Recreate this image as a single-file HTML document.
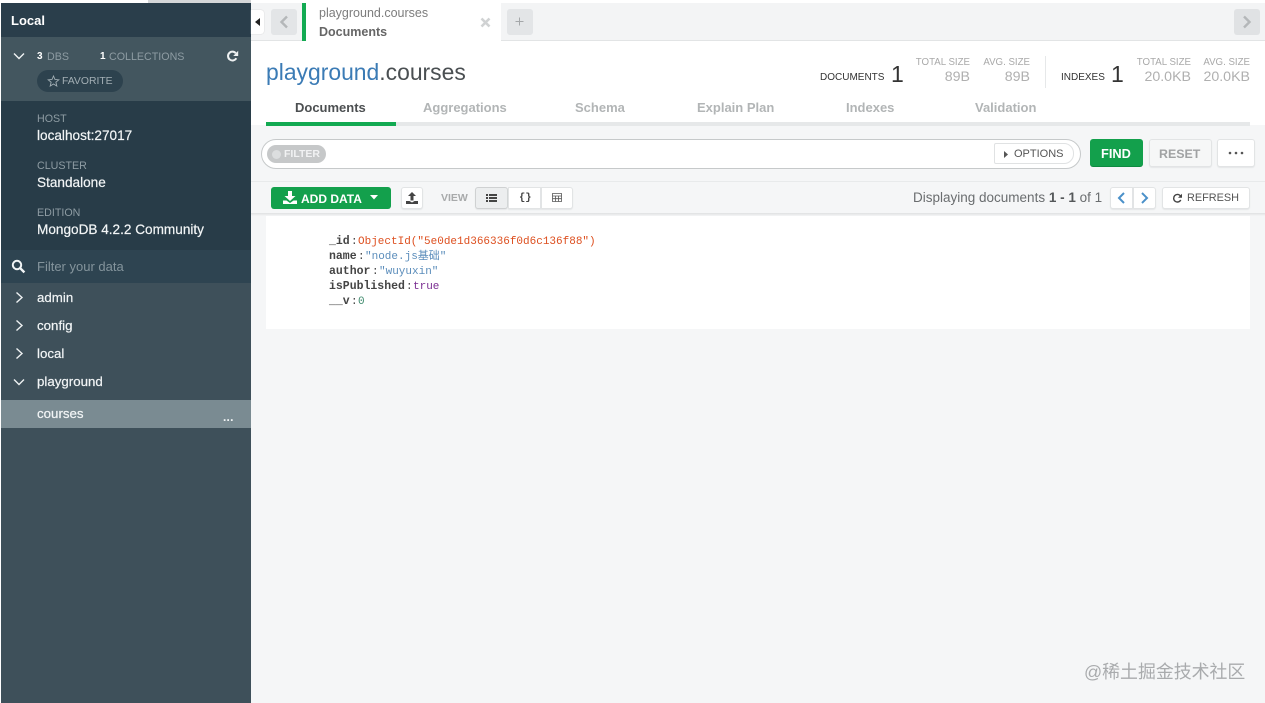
<!DOCTYPE html>
<html>
<head>
<meta charset="utf-8">
<style>
html,body{margin:0;padding:0;width:1265px;height:703px;overflow:hidden;background:#f5f6f7}
body{position:relative;font-family:"Liberation Sans","Noto Sans CJK SC",sans-serif}
div,span.a,svg{position:absolute}
.t{position:absolute;white-space:nowrap;line-height:1}
.w{color:#f2f5f6;font-size:13.3px;-webkit-text-stroke:.2px #f2f5f6}
.v{font-size:13.6px}
.g{color:#8e9ca3;font-size:10.7px}
.tab{font-size:13px;font-weight:bold;color:#b2b5b6;top:101px}
.sl{font-size:9.7px;color:#a9a9a9;top:58px}
.sv{font-size:14.2px;color:#b0b0b0;top:70px}
.m{font-family:"Liberation Mono","Noto Sans CJK SC",monospace;font-size:11px;white-space:nowrap;line-height:1;position:absolute}
.k{color:#444;font-weight:bold;font-size:11.5px}
.btn{background:#fff;border:1px solid #e2e4e5;border-radius:3px;box-sizing:border-box;box-shadow:0 1px 1px #e4e6e7}
</style>
</head>
<body>
<!-- top strip -->
<div style="left:0;top:0;width:1265px;height:3px;background:#fff"></div>
<div style="left:148px;top:0;width:103px;height:3px;background:#d5d7d9"></div>

<!-- sidebar -->
<div style="left:0;top:3px;width:1px;height:700px;background:#fff"></div>
<div style="left:1px;top:3px;width:250px;height:700px;background:#3e505a"></div>
<div style="left:1px;top:3px;width:250px;height:34px;background:#2a3e4b"></div>
<div class="t" style="left:11px;top:14px;font-size:13px;font-weight:bold;color:#fff">Local</div>
<div style="left:1px;top:37px;width:250px;height:64px;background:#43565f"></div>
<svg style="left:13px;top:52px" width="12" height="8" viewBox="0 0 12 8"><path d="M1 1.5 6 6.5 11 1.5" fill="none" stroke="#f0f3f4" stroke-width="1.4"/></svg>
<div class="t" style="left:37px;top:52px;font-size:10px;font-weight:bold;color:#fff">3</div>
<div class="t g" style="left:47px;top:52px">DBS</div>
<div class="t" style="left:100px;top:52px;font-size:10px;font-weight:bold;color:#fff">1</div>
<div class="t g" style="left:109px;top:52px">COLLECTIONS</div>
<svg style="left:226px;top:50px" width="13" height="13" viewBox="0 0 13 13"><path d="M10.3 8.2A4.4 4.4 0 1 1 9.8 3.2" fill="none" stroke="#eef1f2" stroke-width="2"/><path d="M12.2 .8V6H7.2Z" fill="#eef1f2"/></svg>
<div style="left:37px;top:70px;width:86px;height:22px;border-radius:11px;background:#2d424e"></div>
<svg style="left:47px;top:75px" width="13" height="12" viewBox="0 0 13 12"><path d="M6.5 1 8 4.5 11.8 4.8 8.9 7.2 9.8 11 6.5 9 3.2 11 4.1 7.2 1.2 4.8 5 4.5Z" fill="none" stroke="#a3afb5" stroke-width=".9"/></svg>
<div class="t g" style="left:62px;top:77px;color:#a3afb5;font-size:10.4px">FAVORITE</div>

<div style="left:1px;top:101px;width:250px;height:149px;background:#283c48"></div>
<div class="t g" style="left:37px;top:114px">HOST</div>
<div class="t w v" style="left:37px;top:129px">localhost:27017</div>
<div class="t g" style="left:37px;top:161px">CLUSTER</div>
<div class="t w v" style="left:37px;top:176px">Standalone</div>
<div class="t g" style="left:37px;top:208px">EDITION</div>
<div class="t w v" style="left:37px;top:223px">MongoDB 4.2.2 Community</div>

<div style="left:1px;top:250px;width:250px;height:33px;background:#2e4451"></div>
<svg style="left:11px;top:259px" width="15" height="15" viewBox="0 0 15 15"><circle cx="6" cy="6" r="4.2" fill="none" stroke="#f2f5f6" stroke-width="2"/><path d="M9.2 9.2 13.4 13.4" stroke="#f2f5f6" stroke-width="2.4"/></svg>
<div class="t" style="left:37px;top:260px;font-size:13px;color:#84949c">Filter your data</div>

<svg style="left:15px;top:291px" width="9" height="13" viewBox="0 0 9 13"><path d="M1.5 1.5 7 6.5 1.5 11.5" fill="none" stroke="#eef1f2" stroke-width="1.4"/></svg>
<div class="t w" style="left:37px;top:291px">admin</div>
<svg style="left:15px;top:319px" width="9" height="13" viewBox="0 0 9 13"><path d="M1.5 1.5 7 6.5 1.5 11.5" fill="none" stroke="#eef1f2" stroke-width="1.4"/></svg>
<div class="t w" style="left:37px;top:319px">config</div>
<svg style="left:15px;top:347px" width="9" height="13" viewBox="0 0 9 13"><path d="M1.5 1.5 7 6.5 1.5 11.5" fill="none" stroke="#eef1f2" stroke-width="1.4"/></svg>
<div class="t w" style="left:37px;top:347px">local</div>
<svg style="left:13px;top:378px" width="12" height="8" viewBox="0 0 12 8"><path d="M1 1.5 6 6.5 11 1.5" fill="none" stroke="#eef1f2" stroke-width="1.4"/></svg>
<div class="t w" style="left:37px;top:375px">playground</div>
<div style="left:1px;top:400px;width:250px;height:28px;background:#7a8b92"></div>
<div class="t w" style="left:37px;top:407px">courses</div>
<div class="t" style="left:223px;top:411px;font-size:12px;font-weight:bold;color:#f2f5f6;letter-spacing:.2px">...</div>

<!-- tab bar -->
<div style="left:251px;top:3px;width:1014px;height:37px;background:#f3f4f5"></div>
<div style="left:251px;top:40px;width:1014px;height:1px;background:#e2e4e5"></div>
<div style="left:251px;top:10px;width:13px;height:24px;background:#fff;border-radius:0 3px 3px 0;box-shadow:0 0 1px #bbb"></div>
<svg style="left:255px;top:18px" width="6" height="8" viewBox="0 0 6 8"><path d="M5 0V8L0 4Z" fill="#222"/></svg>
<div style="left:271px;top:9px;width:26px;height:26px;background:#e3e5e7;border-radius:3px"></div>
<svg style="left:279px;top:15px" width="10" height="14" viewBox="0 0 10 14"><path d="M8 1.5 2.5 7 8 12.5" fill="none" stroke="#b4b7b9" stroke-width="2.4"/></svg>
<div style="left:302px;top:3px;width:199px;height:38px;background:#fff"></div>
<div style="left:302px;top:3px;width:4px;height:38px;background:#13aa52"></div>
<div class="t" style="left:319px;top:7px;font-size:12.5px;color:#7d7d7d">playground.courses</div>
<div class="t" style="left:319px;top:26px;font-size:12.5px;font-weight:bold;color:#666">Documents</div>
<svg style="left:480px;top:17px" width="11" height="11" viewBox="0 0 11 11"><path d="M1.5 1.5 9.5 9.5M9.5 1.5 1.5 9.5" stroke="#d0d2d3" stroke-width="2.6"/></svg>
<div style="left:507px;top:9px;width:26px;height:26px;background:#e3e5e7;border-radius:3px"></div>
<svg style="left:515px;top:17px" width="9" height="9" viewBox="0 0 9 9"><path d="M4.5 .5V8.5M.5 4.5H8.5" stroke="#a4a7a9" stroke-width="1"/></svg>
<div style="left:1234px;top:9px;width:26px;height:26px;background:#e0e2e4;border-radius:3px"></div>
<svg style="left:1242px;top:15px" width="10" height="14" viewBox="0 0 10 14"><path d="M2 1.5 7.5 7 2 12.5" fill="none" stroke="#b4b7b9" stroke-width="2.4"/></svg>

<!-- header -->
<div style="left:251px;top:41px;width:1014px;height:84px;background:#fff"></div>
<div class="t" style="left:266px;top:61px;font-size:22.9px;color:#3b7bb5">playground<span style="color:#4a4f52">.courses</span></div>

<div class="t" style="left:820px;top:73px;font-size:10px;color:#333">DOCUMENTS</div>
<div class="t" style="left:891px;top:63px;font-size:23px;color:#333">1</div>
<div class="t sl" style="right:295px">TOTAL SIZE</div>
<div class="t sv" style="right:295px">89B</div>
<div class="t sl" style="right:235px">AVG. SIZE</div>
<div class="t sv" style="right:235px">89B</div>
<div style="left:1045px;top:56px;width:1px;height:32px;background:#e6e8e9"></div>
<div class="t" style="left:1061px;top:73px;font-size:10px;color:#333">INDEXES</div>
<div class="t" style="left:1111px;top:63px;font-size:23px;color:#333">1</div>
<div class="t sl" style="right:74px">TOTAL SIZE</div>
<div class="t sv" style="right:74px">20.0KB</div>
<div class="t sl" style="right:15px">AVG. SIZE</div>
<div class="t sv" style="right:15px">20.0KB</div>

<div class="t tab" style="left:295px;color:#4c4f51">Documents</div>
<div class="t tab" style="left:423px">Aggregations</div>
<div class="t tab" style="left:575px">Schema</div>
<div class="t tab" style="left:697px">Explain Plan</div>
<div class="t tab" style="left:846px">Indexes</div>
<div class="t tab" style="left:975px">Validation</div>
<div style="left:266px;top:122px;width:984px;height:4px;background:#e6e8e9"></div>
<div style="left:266px;top:122px;width:130px;height:4px;background:#13aa52"></div>

<!-- query bar -->
<div style="left:261px;top:139px;width:820px;height:30px;box-sizing:border-box;background:#fff;border:1px solid #c6c9ca;border-radius:15px"></div>
<div style="left:267px;top:145px;width:59px;height:18px;background:#c6c8c9;border-radius:9px"></div>
<div style="left:272px;top:150px;width:9px;height:9px;border-radius:50%;background:#dcdedf"></div>
<div class="t" style="left:284px;top:149px;font-size:10.5px;font-weight:bold;color:#f1f2f3">FILTER</div>
<div style="left:994px;top:143px;width:80px;height:21px;box-sizing:border-box;background:#fff;border:1px solid #e0e2e3;border-radius:2px 10px 10px 2px"></div>
<svg style="left:1004px;top:151px" width="5" height="7" viewBox="0 0 5 7"><path d="M0 0 4 3.5 0 7Z" fill="#555"/></svg>
<div class="t" style="left:1014px;top:149px;font-size:11px;color:#555">OPTIONS</div>
<div style="left:1090px;top:139px;width:53px;height:28px;background:#13a04c;border-radius:3px;border-bottom:1px solid #0e8a41;box-sizing:border-box"></div>
<div class="t" style="left:1101px;top:148px;font-size:12.8px;font-weight:bold;color:#fff">FIND</div>
<div class="btn" style="left:1149px;top:139px;width:63px;height:28px;background:#f6f7f7"></div>
<div class="t" style="left:1159px;top:148px;font-size:12.4px;font-weight:bold;color:#a0a2a3">RESET</div>
<div class="btn" style="left:1217px;top:139px;width:38px;height:28px"></div>
<svg style="left:1228px;top:151px" width="16" height="4" viewBox="0 0 16 4"><circle cx="2" cy="2" r="1.3" fill="#555"/><circle cx="8" cy="2" r="1.3" fill="#555"/><circle cx="14" cy="2" r="1.3" fill="#555"/></svg>
<div style="left:251px;top:181px;width:1014px;height:1px;background:#e8eaeb"></div>

<!-- toolbar -->
<div style="left:271px;top:187px;width:120px;height:22px;background:#13a04c;border-radius:3px"></div>
<svg style="left:283px;top:191px" width="14" height="13" viewBox="0 0 14 13"><path d="M5 0H9V5H12.5L7 10 1.5 5H5ZM0 9.5H3.5L7 12 10.5 9.5H14V13H0Z" fill="#fff"/></svg>
<div class="t" style="left:301px;top:193px;font-size:12px;font-weight:bold;color:#fff">ADD DATA</div>
<svg style="left:370px;top:195px" width="8" height="5" viewBox="0 0 8 5"><path d="M0 0H8L4 4.5Z" fill="#fff"/></svg>
<div class="btn" style="left:401px;top:187px;width:22px;height:22px"></div>
<svg style="left:406px;top:192px" width="12" height="12" viewBox="0 0 12 12"><path d="M4.5 8.5V4H2L6 0 10 4H7.5V8.5ZM0 9H3.5L6 10.5 8.5 9H12V12H0Z" fill="#444"/></svg>
<div class="t" style="left:441px;top:193px;font-size:10.5px;font-weight:bold;color:#a8aaab">VIEW</div>
<div class="btn" style="left:475px;top:187px;width:33px;height:22px;background:#eceeef;border-color:#cfd1d2"></div>
<svg style="left:486px;top:193px" width="11" height="10" viewBox="0 0 11 10"><path d="M0 1H2V3H0ZM3 1H11V3H3ZM0 4H2V6H0ZM3 4H11V6H3ZM0 7H2V9H0ZM3 7H11V9H3Z" fill="#444"/></svg>
<div class="btn" style="left:508px;top:187px;width:33px;height:22px;border-radius:0"></div>
<div class="t" style="left:519px;top:193px;font-size:10.5px;font-weight:bold;color:#444;font-family:'Liberation Mono',monospace">{}</div>
<div class="btn" style="left:541px;top:187px;width:32px;height:22px;border-radius:0 3px 3px 0"></div>
<svg style="left:552px;top:193px" width="10" height="9" viewBox="0 0 10 9"><path d="M.5 .5H9.5V8.5H.5ZM.5 3H9.5M.5 5.7H9.5M3.5 3V8.5M6.5 3V8.5" fill="none" stroke="#555" stroke-width=".8"/></svg>

<div class="t" style="left:913px;top:191px;font-size:13.5px;color:#6a6d6f">Displaying documents <span style="font-weight:bold;color:#55585a">1 - 1</span> of 1</div>
<div class="btn" style="left:1110px;top:187px;width:23px;height:22px;border-radius:3px 0 0 3px"></div>
<div class="btn" style="left:1133px;top:187px;width:23px;height:22px;border-radius:0 3px 3px 0"></div>
<svg style="left:1117px;top:192px" width="9" height="12" viewBox="0 0 9 12"><path d="M7 1 2 6 7 11" fill="none" stroke="#4a90c9" stroke-width="2"/></svg>
<svg style="left:1140px;top:192px" width="9" height="12" viewBox="0 0 9 12"><path d="M2 1 7 6 2 11" fill="none" stroke="#4a90c9" stroke-width="2"/></svg>
<div class="btn" style="left:1162px;top:187px;width:88px;height:22px"></div>
<svg style="left:1172px;top:193px" width="11" height="11" viewBox="0 0 11 11"><path d="M8.8 7A3.8 3.8 0 1 1 8.4 2.8" fill="none" stroke="#444" stroke-width="1.4"/><path d="M10 .8V4.8H6Z" fill="#444"/></svg>
<div class="t" style="left:1187px;top:193px;font-size:10.9px;color:#555">REFRESH</div>

<div style="left:251px;top:213px;width:1014px;height:3px;background:linear-gradient(#dfe1e2,#f5f6f7)"></div>

<!-- document -->
<div style="left:266px;top:216px;width:984px;height:113px;background:#fff"></div>
<div class="m k" style="left:329px;top:236px">_id</div><div class="m" style="left:351px;top:237px;color:#444">:</div>
<div class="m" style="left:358px;top:237px;color:#dd4f1f">ObjectId("5e0de1d366336f0d6c136f88")</div>
<div class="m k" style="left:329px;top:251px">name</div><div class="m" style="left:358px;top:252px;color:#444">:</div>
<div class="m" style="left:365px;top:252px;color:#5b8dbb">"node.js基础"</div>
<div class="m k" style="left:329px;top:266px">author</div><div class="m" style="left:372px;top:267px;color:#444">:</div>
<div class="m" style="left:379px;top:267px;color:#5b8dbb">"wuyuxin"</div>
<div class="m k" style="left:329px;top:281px">isPublished</div><div class="m" style="left:406px;top:282px;color:#444">:</div>
<div class="m" style="left:413px;top:282px;color:#7a2d91">true</div>
<div class="m k" style="left:329px;top:296px">__v</div><div class="m" style="left:351px;top:297px;color:#444">:</div>
<div class="m" style="left:358px;top:297px;color:#3e8a6d">0</div>

<!-- watermark -->
<div class="t" style="left:1084px;top:664px;font-size:17.9px;color:#a9abad">@稀土掘金技术社区</div>
</body>
</html>
